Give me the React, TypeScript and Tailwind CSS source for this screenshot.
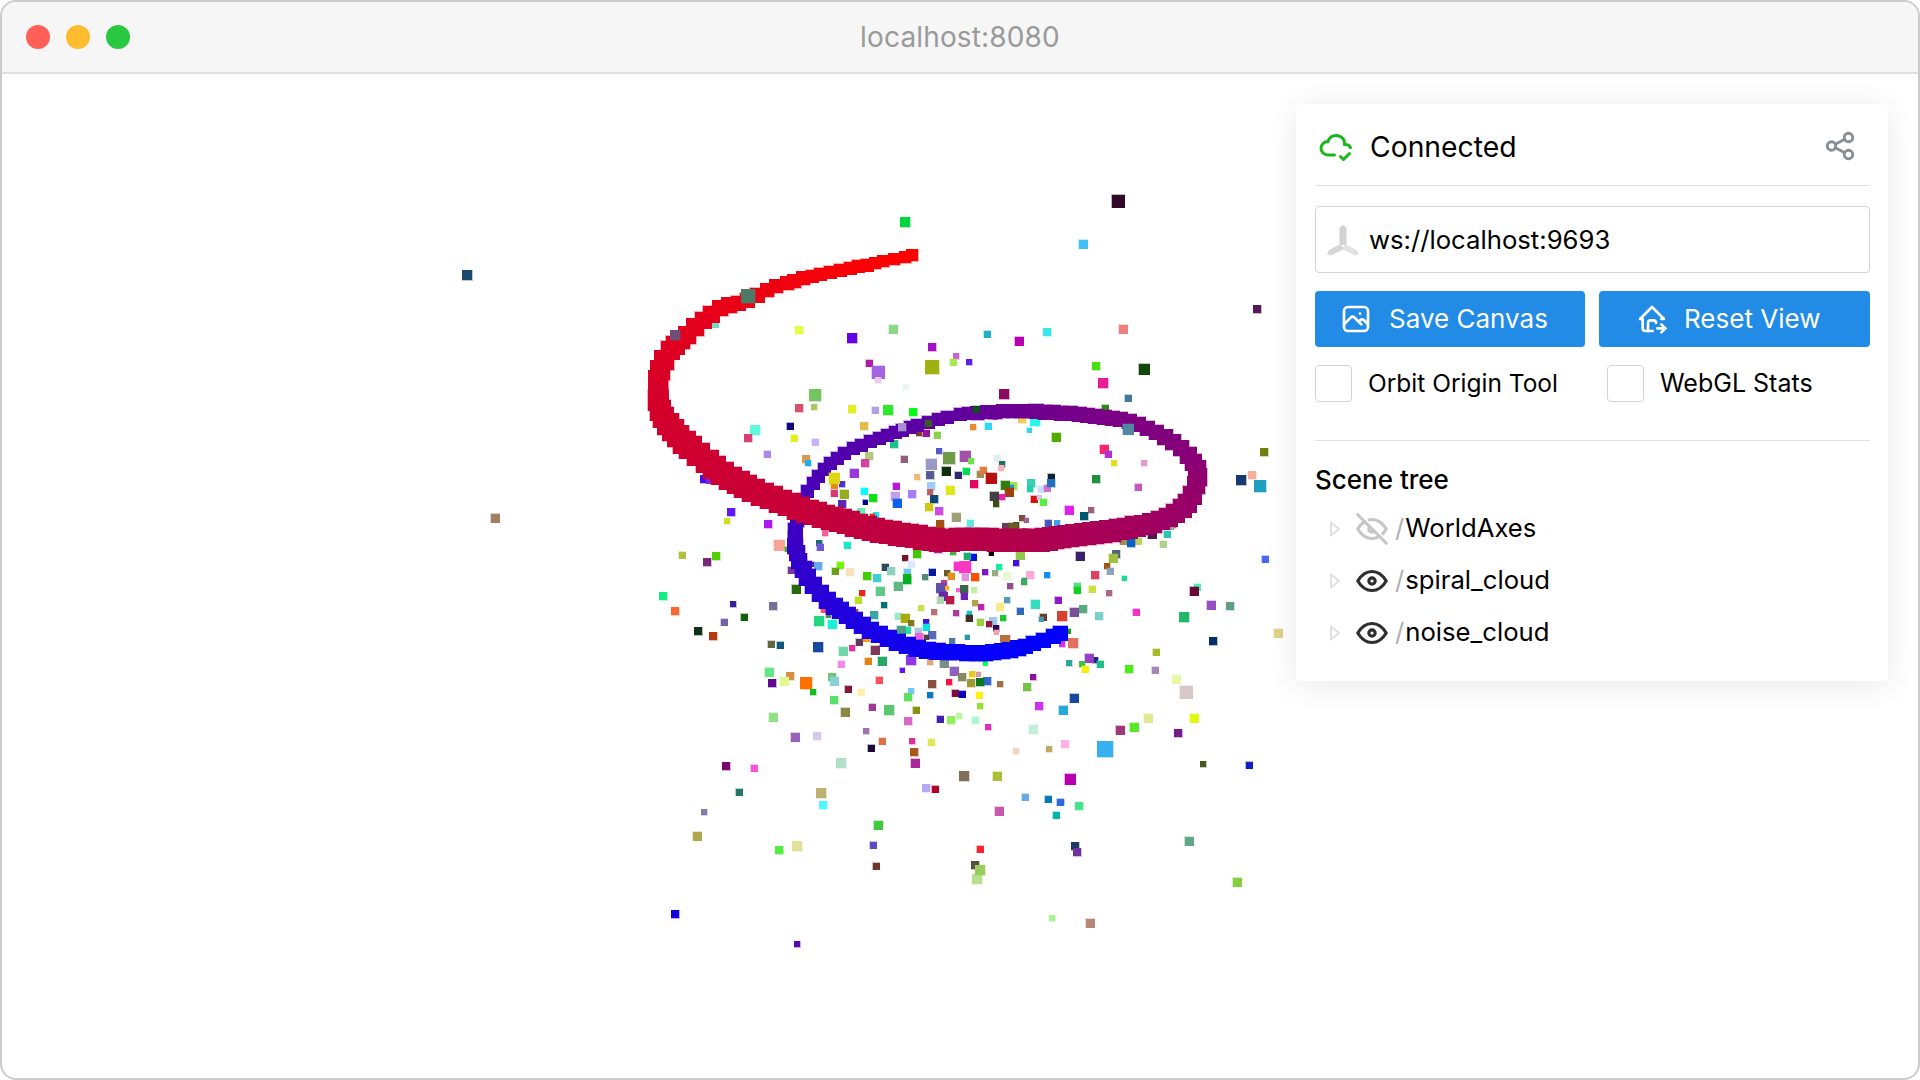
import React from "react";
import { TbCloudCheck, TbShare, TbPhoto, TbHomeMove, TbEye, TbEyeOff } from "react-icons/tb";

const BACK = `905,222,10,00d63f 714,323,9,6fd9c6 799,330,8,e2ff40 852,338,10,6600e6 893,329,9,8bd985 932,347,8,a60fc6 869,363,7,b01ba8 878,372,13,a463e3 932,367,14,a0b010
815,395,12,73c65e 799,408,8,d6506a 814,407,6,a8c860 852,409,8,e3ef20 875,410,7,b39fe3 888,410,10,2ee82a 913,412,8,00ff10 906,387,6,e5f7ef 878,380,6,e6c8f0 755,430,10,5ff8e0 748,438,8,d83e78 790,426,7,100880 794,438,7,e4ef1a 815,442,7,c9b0ff 767,454,7,a887f0 864,426,8,e0c04a 919,433,6,7d4020 926,433,7,9a10a0 937,435,7,8ed050 894,444,8,1fc088 869,456,8,b4c880 865,463,8,d83fa0 904,459,7,8f6078 939,451,6,5858c8 949,458,12,6f9a4a 931,464,11,9a9ac4 930,475,8,5a5a98 946,471,9,0f2f0a 958,475,7,302a70 917,477,6,f4b878 806,459,8,d99a50 808,463,6,20b0f0 834,485,7,e88a10 854,473,9,9a38e0 842,484,6,5030d0 844,494,9,98ac20 834,493,7,d83878 864,491,7,00ffff 873,498,8,10e010 865,502,5,000090 896,486,7,b818d8 895,496,9,c49ee8 912,494,8,a47ef8 931,486,8,a0ccff 930,492,6,c06060 934,499,8,104878 950,490,9,e0e818 929,507,8,d0c810 939,511,8,d048e8 956,517,9,a0a078 940,524,8,a84e10 897,503,9,1060f0 842,504,8,5a28b0 861,512,8,60f0b0 876,515,6,20e0f0 872,516,5,e03010 731,512,8,6018ff 704,479,8,4010f0 708,481,5,8020e0 727,521,6,d0e020 768,524,8,b018f0 825,533,6,f060a0 779,545,11,f8a498 819,543,6,206878 820,547,7,7058d8 847,545,7,18e8d0 682,555,7,b0c040 716,556,8,50d000 707,562,8,78287a 787,549,5,40b020 812,564,5,5020b0 818,566,8,68a8f0 840,565,7,70f800 791,570,7,783898 835,571,7,68a018 850,572,8,fbe0c0 867,576,8,40d000 877,578,8,40d0d0 885,567,7,304860 891,571,8,90d0c0 905,558,6,701828 917,554,8,40c800 911,564,7,e0e8ff 907,572,7,68c8f0 907,578,8,10b010 925,577,6,508878 932,572,7,0818a0 947,573,6,685828 951,576,7,e09020 958,566,9,f830d0 953,552,6,40b040 938,549,8,b020a0 920,543,6,1a3a80 875,537,7,90c060
1103,383,10,e81a98 1004,394,10,8a0a60 1128,398,7,44789a 1105,408,7,308a10 995,417,5,f020e0 1022,419,8,f8c858 1035,421,10,28f8e8 973,427,6,e88a30 988,426,7,30d8f0 1029,430,5,30d8f0 1056,437,9,50ac00 1104,449,9,f82868 1108,454,7,b030d0 1114,463,6,e0e020 1144,463,6,e898c8 965,456,11,a050a8 971,461,6,70e050 997,458,7,e0f0e8 1002,464,6,207060 1001,468,6,f8b0c0 966,471,7,00e050 980,474,7,a09050 983,470,7,e87840 991,478,11,b81010 974,484,8,e00860 1013,486,8,a0e050 1011,487,5,2090e0 1005,485,9,308010 1009,492,9,a04010 994,496,9,404040 1002,497,6,e820b0 996,504,6,385010 1031,483,8,38d0b0 1030,489,6,18d0b0 1041,489,7,c8e0ff 1047,488,7,d070c8 1051,477,7,102030 1051,483,8,2070c0 1034,499,7,d81010 1039,497,5,e0c0f0 1043,502,7,58f040 1069,510,9,e020f0 1096,479,8,209040 1138,487,7,c858c0 1091,510,6,a06078 1084,516,8,005870 1022,518,6,785040 1026,520,5,a06090 1048,523,7,4858c0 1057,523,6,40a0f0 970,523,7,60e8e0 1006,527,8,703858 1016,525,6,504010 1013,527,9,686020 1024,530,4,c03838 1172,524,8,f06010 1171,527,5,90a8a0 1264,452,8,708010 1252,475,8,f8b098 1260,486,12,20a0c0 1241,480,10,183870 1152,534,9,481c48 1167,534,7,28c8b0 1163,544,7,b0d090 1138,541,7,c0d060 1123,541,7,a09050 1131,543,8,0860c8 1116,554,8,586080 1113,558,9,a0c040 1080,556,9,382070 1107,566,6,a05810 1110,571,7,90a0c0 1095,575,8,e04060 1124,578,5,10e090 1265,559,7,4868f8 1020,555,9,90c848 1016,563,6,4010e0 991,553,5,080808 973,557,7,0010e0 967,556,7,18b070 965,567,12,f838c0 999,567,6,10f0a0 985,572,6,7818c0 995,573,6,a0a880 1007,576,8,e8f8d0 1030,575,8,ffa8d8 1047,575,6,1090f0 975,577,8,f85000 965,577,7,e090e0 1024,580,5,30a070
898,586,9,60b888 880,591,9,60c888 862,593,6,e82818 858,600,7,b8e020 884,605,6,007070 796,589,9,286808 773,606,8,787098 907,580,8,00b020 944,583,6,c83898 941,588,10,6050a8 943,596,9,6a28a8 950,600,8,b81848 940,600,7,b0d8b0 947,588,4,f8b020 958,590,4,f860e0 964,589,8,386848 964,596,7,7020b0 974,590,6,c0f0a0 1010,586,6,905090 1024,582,6,40a860 1077,586,7,50e080 1077,590,7,10d020 921,608,6,c8e050 934,612,6,b87078 956,613,6,b03898 975,603,6,b8a050 981,607,6,b828a8 1007,600,6,5898b8 1000,607,8,f8e888 1020,611,7,3068c0 1035,604,9,30e0c0 1058,600,7,9018c8 1074,612,9,785098 1062,616,10,d84030 1043,617,7,684020 1041,619,5,40a0b0 1003,618,6,20c830 980,622,7,98d040 969,613,5,10c8c0 969,618,7,403028 993,621,8,a0c8f0 989,624,6,901840 996,628,6,280858 996,632,5,f8a0b0 1068,631,5,10a010 1062,644,6,d030e8 1073,643,10,e07060 1005,640,10,b87040 967,637,5,2898b0 1069,663,6,28a898 985,663,5,10f860 823,610,5,f84878 828,615,5,508858 855,612,6,b04838 819,621,10,20d880 832,624,9,18f0d8 874,615,8,38a8a0 898,616,7,a0e8c8 905,618,9,a8a810 911,623,6,807820 926,622,6,4010e0 918,631,7,a8c8d8 926,627,7,10e0d8 907,630,7,20e0b0 901,630,9,50a088 932,635,8,5868b8 952,641,6,5078a8 926,637,5,504040 919,637,8,f060d8 866,638,7,f8a010 859,642,7,603858 852,648,6,e030a0 875,650,9,803858 843,651,9,70d8a8 818,647,10,1848a0 780,645,7,105878 771,644,7,606840 868,661,7,e88010 882,661,9,28a868 841,664,7,f088f0 911,653,7,e81090 911,660,10,9038e8 930,662,6,e0a878 944,663,9,789088 902,670,5,6010ff 954,671,9,9060c0 972,674,6,f0c818 978,674,5,d0a0a0 962,677,8,888860 987,681,8,3068d0 980,682,8,107820 971,683,8,a09830 1000,684,6,a07040 1033,677,6,9010a0 1027,687,8,78c048 932,684,8,885040 949,682,6,ff1040 879,680,7,f85060 790,676,8,d89040 769,672,9,60e888 784,681,9,e0f890 772,683,8,600890 806,683,12,ff7000 832,677,8,70c870 834,681,9,88d0d8 848,689,7,801838 861,692,7,fff0a8 813,692,6,10c020 955,693,7,880840 962,694,7,0808b8 979,695,7,fff010 930,695,6,0878c8 911,691,6,70c8f8 908,697,8,60e060 834,700,8,58e068 845,712,9,888840 872,707,7,a03898 889,710,10,58c870 916,710,7,889010 980,706,6,98e030 1039,706,8,d030f0 1074,698,9,1848a0 1063,710,9,28a8d8 773,717,9,90e088 795,737,9,9860b8 817,736,8,d8c8e8 866,731,6,a070a8 908,721,8,d868c8 940,719,7,4020b0 951,720,8,90f060 959,716,6,b8f8a0 975,720,7,a8f8d0 988,727,6,e030c0 1033,729,9,c0f0d8 1065,744,8,ffb0e8 1016,751,6,f8d0c0 1049,749,6,c0a860 882,741,7,e07048 912,741,6,e03098 931,742,7,e0e858 871,748,7,200838 914,752,8,a85818 915,763,9,a82898 841,763,10,b0e0c8
663,596,8,10f080 675,611,8,ff6830 733,604,6,382098 724,622,7,7860a8 744,617,7,106010 698,631,8,103018 713,636,8,b83810 726,766,8,780870 754,768,7,f850d8
1118,201,13,300828 1083,244,9,40c0f8 987,334,7,20b0c8 1019,341,9,b800b0 1047,332,8,38e8f0 1123,329,9,f08080 1257,309,8,581858 956,356,6,d060d0 953,362,7,a8e850 969,362,6,6020e0 1096,366,8,48e010 1144,369,11,104808
1092,589,7,c8e040 1109,593,6,a86888 1197,587,7,48f0a8 1194,591,9,680838 1211,605,9,9850c0 1230,606,8,60a080 1184,617,10,20b868 1136,612,7,f830c8 1099,616,8,78d0c8 1083,609,8,58a880 1156,652,7,a8b828 1213,641,8,083068 1278,633,9,e0d088 1095,660,6,182890 1089,658,9,9840c8 1100,664,7,20c088 1082,664,6,40c040 1085,669,7,f8f010 1129,669,8,48f010 1155,670,7,a088b8 1176,679,9,e8f8a8 1186,692,13,d8c8c8 1148,718,9,e0e890 1194,718,9,e0f810 1120,730,9,a03878 1134,727,9,58e828 1178,733,8,781890 1105,749,16,38b0f0 1203,764,6,485820 1249,765,7,1020c0 1070,779,11,b800b0 1061,802,6,3070e0 1079,806,8,40e888
739,792,7,207868 704,812,6,8878b0 697,836,9,b0a850 779,850,8,50f040 797,846,10,e0e098 821,793,10,c0b070 823,805,8,50f8ff 878,825,9,40c840 873,845,7,6048c8 876,866,7,703828 926,788,8,b8a8f8 935,789,7,b80028 964,776,10,807058 997,776,9,a8c038 1025,797,7,68a8e8 1048,799,7,0878b8 1060,802,7,3068e0 1056,815,7,00b8a8 999,811,9,c858b0 1075,846,8,203868 1077,852,8,7030a0 980,849,7,ff2030 975,865,8,585038 977,879,10,b8e090 980,870,10,98d060 1052,918,6,a0f888 1090,923,9,b88878 675,914,8,1000e0 797,944,6,5808b0 467,275,10,1a4a70 495,518,9,a08060 1237,882,9,80d040 1189,841,9,60a888`;

const FRONT = `748,296,14,4c7a66 675,335,10,6f4f7c 976,409,7,0f4f20 1128,429,11,5088a0 928,423,7,3a5a25 902,427,8,a98ed4 834,478,11,dfd810`;

const parse = (s: string) =>
  s.split(/\s+/).filter(Boolean).map((t) => {
    const [x, y, z, c] = t.split(",");
    return { x: +x, y: +y, s: +z, c: "#" + c };
  });

// x, y, sprite size, blue amount
const KEY: number[][] = [
  [912, 255, 12, 0], [883, 261, 12, 2], [850, 268, 13, 6], [820, 274, 13, 10], [787, 283, 14, 14], [767, 290, 14, 18], [747, 300, 15, 20], [720, 308, 16, 24], [703, 320, 17, 28], [687, 335, 18, 30], [670, 350, 19, 34], [660, 370, 20, 38], [658, 390, 20, 42], [660, 410, 21, 44], [673, 430, 22, 46], [690, 447, 23, 48], [707, 461, 23, 50], [730, 478, 23, 52], [753, 490, 23, 54], [780, 501, 23, 56], [807, 511, 23, 58], [840, 520, 23, 62], [873, 529, 23, 64], [907, 535, 23, 66], [940, 540, 23, 68], [960, 539, 23, 70], [1027, 540, 23, 78], [1060, 537, 22, 84], [1093, 533, 22, 88], [1127, 528, 21, 92], [1160, 520, 19, 98], [1187, 503, 19, 104], [1198, 477, 18, 112], [1193, 462, 17, 118], [1173, 442, 16, 124], [1147, 428, 15, 128], [1120, 419, 15, 132], [1087, 415, 15, 136], [1053, 412, 15, 140], [1020, 411, 14, 146], [987, 412, 14, 152], [960, 414, 13, 158], [947, 417, 13, 160], [917, 425, 13, 164], [887, 435, 13, 168], [853, 448, 13, 172], [830, 463, 13, 176], [813, 483, 13, 182], [803, 500, 13, 186], [795, 530, 15, 194], [797, 553, 16, 202], [807, 577, 17, 210], [827, 600, 17, 218], [847, 615, 17, 224], [870, 630, 17, 230], [897, 642, 17, 238], [927, 650, 17, 244], [957, 652, 16, 248], [977, 653, 16, 250], [1010, 650, 16, 252], [1033, 643, 15, 254], [1060, 633, 15, 255],
];

function spiral() {
  const out: { x: number; y: number; s: number; c: string }[] = [];
  const k = KEY;
  for (let i = 0; i < k.length - 1; i++) {
    const p0 = k[Math.max(0, i - 1)], p1 = k[i], p2 = k[i + 1], p3 = k[Math.min(k.length - 1, i + 2)];
    const len = Math.hypot(p2[0] - p1[0], p2[1] - p1[1]);
    const n = Math.max(1, Math.round(len / 9));
    for (let j = 0; j < n; j++) {
      const t = j / n;
      const cr = (a: number, b: number, c: number, d: number) =>
        0.5 * (2 * b + (c - a) * t + (2 * a - 5 * b + 4 * c - d) * t * t + (3 * b - a - 3 * c + d) * t * t * t);
      const b = Math.round(p1[3] + (p2[3] - p1[3]) * t);
      out.push({
        x: Math.round(cr(p0[0], p1[0], p2[0], p3[0])),
        y: Math.round(cr(p0[1], p1[1], p2[1], p3[1])),
        s: Math.round(p1[2] + (p2[2] - p1[2]) * t),
        c: `rgb(${255 - b},0,${b})`,
      });
    }
  }
  out.push({ x: 1060, y: 633, s: 15, c: "rgb(0,0,255)" });
  return out.reverse();
}

function Squares({ items }: { items: { x: number; y: number; s: number; c: string }[] }) {
  return (
    <>
      {items.map((p, i) => (
        <rect key={i} x={p.x - p.s / 2} y={p.y - p.s / 2} width={p.s} height={p.s} fill={p.c} stroke={p.c} strokeOpacity={0.3} strokeWidth={1} />
      ))}
    </>
  );
}

function Fan() {
  return (
    <svg width="34" height="32" viewBox="0 0 34 32" className="shrink-0">
      <path d="M17 1 L13.5 4 L13.5 21 L20.5 21 L20.5 4 Z" fill="#d2d2d2" />
      <path d="M14.5 20 L3 26 L1 30 L5 31.5 L18 25 Z" fill="#d6d6d6" />
      <path d="M19.5 20 L31 26.5 L33 30 L29 31.5 L16 25 Z" fill="#e2e2e2" />
    </svg>
  );
}

function Caret() {
  return (
    <svg width="12" height="16" viewBox="0 0 12 16" className="shrink-0">
      <path d="M2 1.5 L10 8 L2 14.5 Z" fill="none" stroke="#dedede" strokeWidth="1.8" strokeLinejoin="round" />
    </svg>
  );
}

function Row({ name, off }: { name: string; off?: boolean }) {
  return (
    <div className="flex h-[52px] items-center pl-[14px] text-[25.7px]">
      <Caret />
      <div className="ml-[12px] flex w-[40px] shrink-0 items-center">
        {off ? <TbEyeOff size={38} color="#c6c6c6" /> : <TbEye size={38} color="#2e2e2e" />}
      </div>
      <span className="ml-[2px] text-[#b0b0b0]">/</span>
      <span className="ml-[1px]">{name}</span>
    </div>
  );
}

function Check({ label, className, textClass }: { label: string; className: string; textClass: string }) {
  return (
    <div className={`flex items-center ${className}`}>
      <div className="h-[37px] w-[37px] shrink-0 rounded-[4px] border border-[#ced4da] bg-white" />
      <span className={`ml-[16px] ${textClass}`}>{label}</span>
    </div>
  );
}

export default function App() {
  const back = parse(BACK);
  const front = parse(FRONT);
  const sp = spiral();
  return (
    <div className="h-[1080px] w-[1920px] overflow-hidden bg-white" style={{ fontFamily: "Inter, 'Liberation Sans', sans-serif" }}>
      <div className="flex h-full w-full flex-col overflow-hidden rounded-[16px] border-2 border-[#cbcbcb] bg-white">
        <div className="relative flex h-[72px] shrink-0 items-center border-b-2 border-[#e0e0e0] bg-[#f6f6f6] pl-[24px]">
          <div className="flex gap-[16px]">
            <div className="h-[24px] w-[24px] rounded-full bg-[#ff5f57]" />
            <div className="h-[24px] w-[24px] rounded-full bg-[#febc2e]" />
            <div className="h-[24px] w-[24px] rounded-full bg-[#28c840]" />
          </div>
          <div className="absolute inset-x-0 top-0 flex h-full items-center justify-center text-[28px] tracking-[0.15px] text-[#9a9a9a]">localhost:8080</div>
        </div>
        <div className="relative flex-1">
          <svg className="absolute left-0 top-0" width="1916" height="1004" viewBox="2 74 1916 1004" shapeRendering="crispEdges">
            <Squares items={back} />
            <Squares items={sp} />
            <Squares items={front} />
          </svg>
          <div className="absolute right-[30px] top-[30px] w-[592px] rounded-[4px] bg-white pb-[22px] pl-[19px] pr-[18px] text-[26px] text-black shadow-[0_4px_32px_rgba(0,0,0,0.09)]">
            <div className="flex h-[82px] items-center justify-between border-b border-[#dee2e6] pt-[3px]">
              <div className="flex items-center">
                <TbCloudCheck size={36} color="#17b817" className="ml-[3px] shrink-0" />
                <span className="ml-[16px] pt-[2px] text-[28.3px]">Connected</span>
              </div>
              <TbShare size={34} color="#868e96" className="mr-[13px]" />
            </div>
            <div className="mt-[20px] flex h-[67px] items-center rounded-[4px] border border-[#ced4da] pl-[10px] pt-[1px] text-[25.7px]">
              <Fan />
              <span className="ml-[9px]">ws://localhost:9693</span>
            </div>
            <div className="mt-[18px] flex gap-[14px]">
              <div className="flex h-[56px] w-[270px] items-center rounded-[4px] bg-[#228be6] pb-[1px] pl-[25px] text-white">
                <TbPhoto size={32} />
                <span className="ml-[17px]">Save Canvas</span>
              </div>
              <div className="flex h-[56px] w-[271px] items-center rounded-[4px] bg-[#228be6] pb-[1px] pl-[37px] text-white">
                <TbHomeMove size={32} />
                <span className="ml-[16px]">Reset View</span>
              </div>
            </div>
            <div className="mt-[18px] flex">
              <Check label="Orbit Origin Tool" className="w-[292px]" textClass="text-[24.5px]" />
              <Check label="WebGL Stats" className="" textClass="text-[25px]" />
            </div>
            <div className="mt-[37px] border-t border-[#dee2e6]" />
            <div className="mt-[23px] text-[26px] font-medium leading-[32px]">Scene tree</div>
            <div className="mt-[7px]">
              <Row name="WorldAxes" off />
              <Row name="spiral_cloud" />
              <Row name="noise_cloud" />
            </div>
          </div>
        </div>
      </div>
    </div>
  );
}
